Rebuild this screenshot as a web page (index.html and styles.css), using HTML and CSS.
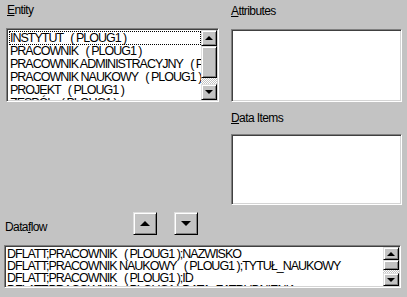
FILE: index.html
```html
<!DOCTYPE html>
<html lang="pl">
<head>
    <meta charset="UTF-8">
    <title>Dataflow</title>
    <link rel="stylesheet" href="styles.css">
</head>
<body>
    <div class="dialog">
        <div class="top">
            <div class="col-left">
                <div class="caption entity-cap"><u>E</u>ntity</div>
                <div class="listbox entity">
                    <div class="rows">
                        <div class="row focus">INSTYTUT   ( PLOUG1 )</div>
                        <div class="row">PRACOWNIK   ( PLOUG1 )</div>
                        <div class="row">PRACOWNIK ADMINISTRACYJNY   ( PLOUG1 )</div>
                        <div class="row">PRACOWNIK NAUKOWY   ( PLOUG1 )</div>
                        <div class="row">PROJEKT   ( PLOUG1 )</div>
                        <div class="row">ZESPÓŁ   ( PLOUG1 )</div>
                    </div>
                    <div class="scrollbar">
                        <div class="sbtn"><span class="tri up"></span></div>
                        <div class="thumb"></div>
                        <div class="track"></div>
                        <div class="sbtn"><span class="tri down"></span></div>
                    </div>
                </div>
            </div>
            <div class="col-right">
                <div class="caption attr-cap"><u>A</u>ttributes</div>
                <div class="listbox attr"></div>
                <div class="caption items-cap"><u>D</u>ata Items</div>
                <div class="listbox items"></div>
            </div>
        </div>
        <div class="flow-head">
            <div class="caption flow-cap">Data<u>f</u>low</div>
            <div class="arrows">
                <div class="pbtn"><span class="tri up big"></span></div>
                <div class="pbtn"><span class="tri down big"></span></div>
            </div>
        </div>
        <div class="listbox dataflow">
            <div class="rows">
                <div class="row">DFLATT;PRACOWNIK   ( PLOUG1 );NAZWISKO</div>
                <div class="row">DFLATT;PRACOWNIK NAUKOWY   ( PLOUG1 );TYTUŁ_NAUKOWY</div>
                <div class="row">DFLATT;PRACOWNIK   ( PLOUG1 );ID</div>
                <div class="row">DFLATT;PRACOWNIK   ( PLOUG1 );DATA_ZATRUDNIENIA</div>
            </div>
            <div class="scrollbar">
                <div class="sbtn"><span class="tri up"></span></div>
                <div class="thumb"></div>
                <div class="track"></div>
                <div class="sbtn"><span class="tri down"></span></div>
            </div>
        </div>
    </div>
</body>
</html>
```

FILE: styles.css
```css
body {
    margin: 0;
    background: #c3c3c3;
    font-family: "Liberation Sans", Arial, sans-serif;
    font-size: 12px;
    color: #000;
}
.dialog {
    width: 407px;
    height: 297px;
    overflow: hidden;
}
.top {
    display: flex;
    gap: 12px;
    padding-left: 6px;
}
.col-left {
    width: 213px;
}
.col-right {
    width: 171px;
    padding-top: 1px;
}
.caption {
    height: 13px;
    line-height: 13px;
    letter-spacing: -0.6px;
}
.caption u {
    text-decoration-thickness: 1px;
    text-underline-offset: 1px;
}
.entity-cap {
    padding: 4px 0 0 1px;
    margin-bottom: 11px;
}
.attr-cap {
    padding-top: 4px;
    margin-bottom: 11px;
}
.items-cap {
    margin-top: 10px;
    margin-bottom: 9px;
}

/* sunken white boxes */
.listbox {
    box-sizing: border-box;
    background: #fff;
    border: 1px solid;
    border-color: #808080 #fff #fff #808080;
    box-shadow: inset 1px 1px #404040, inset -1px -1px #d4d4d4;
    padding: 1px;
    display: flex;
    overflow: hidden;
}
.entity {
    height: 74px;
}
.attr {
    height: 73px;
}
.items {
    height: 71px;
}
.rows {
    flex: 1;
    overflow: hidden;
    padding: 1px 0 0 1px;
}
.row {
    white-space: pre;
    height: 13px;
    line-height: 13px;
    padding-left: 1px;
    font-size: 12.5px;
    letter-spacing: -1px;
}
.row.focus {
    outline: 1px dotted #000;
    outline-offset: -1px;
    height: 14px;
    line-height: 14px;
}

/* scrollbars */
.scrollbar {
    width: 16px;
    display: flex;
    flex-direction: column;
}
.sbtn, .thumb, .pbtn {
    box-sizing: border-box;
    background: #c3c3c3;
    border: 1px solid;
    border-color: #dfdfdf #000 #000 #dfdfdf;
    box-shadow: inset 1px 1px #fff, inset -1px -1px #808080;
}
.sbtn {
    height: 16px;
    display: flex;
    align-items: center;
    justify-content: center;
}
.entity .thumb {
    height: 32px;
}
.track {
    flex: 1;
    background: repeating-conic-gradient(#fff 0 25%, #c3c3c3 0 50%) 0 0 / 2px 2px;
}
.tri {
    width: 0;
    height: 0;
    border-left: 4px solid transparent;
    border-right: 4px solid transparent;
}
.tri.up {
    border-bottom: 4px solid #000;
}
.tri.down {
    border-top: 4px solid #000;
}
.tri.big {
    border-left-width: 5px;
    border-right-width: 5px;
}
.tri.big.up {
    border-bottom-width: 5px;
}
.tri.big.down {
    border-top-width: 5px;
}

/* dataflow part */
.flow-head {
    display: flex;
    align-items: flex-start;
    margin-top: 7px;
    padding-left: 5px;
}
.flow-cap {
    width: 128px;
    margin-top: 9px;
}
.arrows {
    display: flex;
    gap: 17px;
}
.pbtn {
    width: 24px;
    height: 23px;
    display: flex;
    align-items: center;
    justify-content: center;
}
.dataflow {
    width: 397px;
    height: 43px;
    margin: 10px 0 0 4px;
}
.dataflow .rows {
    padding-left: 0;
}
.dataflow .row {
    height: 12px;
    line-height: 12px;
}
.dataflow .sbtn {
    height: 13px;
}
.dataflow .thumb {
    height: 10px;
}
```
